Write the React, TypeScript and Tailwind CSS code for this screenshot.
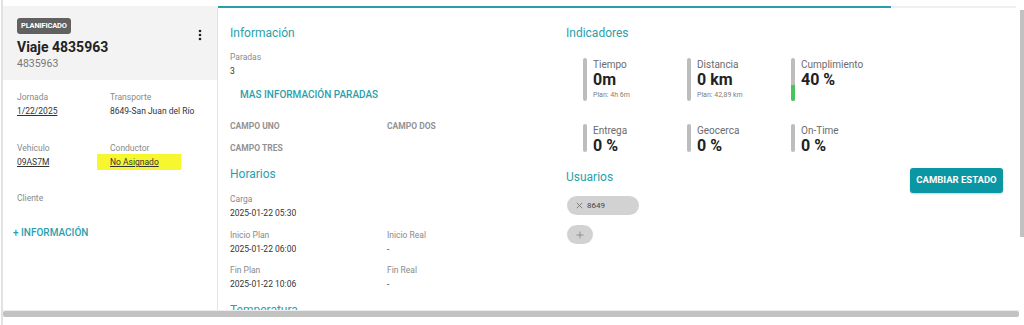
import React from "react";

const teal = "text-[#2a9fab]";

function Field({ label, value, className = "" }: { label: string; value: React.ReactNode; className?: string }) {
  return (
    <div className={className}>
      <div className="text-[8.5px] leading-[12px] text-[#8a8a8a]">{label}</div>
      <div className="mt-[2px] text-[8.5px] leading-[12px] text-[#333]">{value}</div>
    </div>
  );
}

function Indicator({
  label,
  value,
  plan,
  tall,
  fill,
}: {
  label: string;
  value: string;
  plan?: string;
  tall: boolean;
  fill?: boolean;
}) {
  return (
    <div className="w-[104px] flex gap-[6px]">
      <div
        className={`w-[4px] rounded-full bg-[#bdbdbd] flex flex-col justify-end overflow-hidden ${
          tall ? "h-[43px]" : "h-[28px]"
        }`}
      >
        {fill && <div className="h-[37%] w-full bg-[#4cc25c]" />}
      </div>
      <div>
        <div className="text-[10px] leading-[13px] text-[#6b6b6b]">{label}</div>
        <div className="text-[16px] leading-[18px] font-bold text-[#222]">{value}</div>
        {plan && <div className="mt-[1px] text-[7px] leading-[10px] text-[#808080]">{plan}</div>}
      </div>
    </div>
  );
}

export default function App() {
  return (
    <div className="w-[1024px] h-[325px] bg-white overflow-hidden flex font-['Roboto',sans-serif]">
      <div className="w-[1018px] flex flex-col border-l-[2px] border-[#e2e2e2] ml-[1px]">
        <div className="h-[6px]" />
        <div className="h-[2px] flex">
          <div className="w-[215px] bg-[#f3f3f3]" />
          <div className="w-[673px] bg-[#2a9fab]" />
          <div className="w-[125px] bg-[#efefef]" />
        </div>
        <div className="h-[302px] flex overflow-hidden">
          {/* Left panel */}
          <div className="w-[215px] shrink-0 border-r border-[#e3e3e3] flex flex-col">
            <div className="h-[72px] bg-[#f3f3f3] relative pl-[14px] pt-[10px] flex flex-col items-start">
              <div className="flex h-[16px] items-center rounded-[3px] bg-[#616161] px-[4px] text-[7.5px] leading-[8px] font-bold text-white tracking-tight">
                PLANIFICADO
              </div>
              <div className="mt-[4px] text-[14px] leading-[18px] font-bold text-[#222]">Viaje 4835963</div>
              <div className="mt-[1px] text-[10.5px] leading-[14px] text-[#777]">4835963</div>
              <svg className="absolute left-[194px] top-[21px]" width="6" height="12" viewBox="0 0 6 12">
                <circle cx="3" cy="2" r="1.3" fill="#222" />
                <circle cx="3" cy="6" r="1.3" fill="#222" />
                <circle cx="3" cy="10" r="1.3" fill="#222" />
              </svg>
            </div>
            <div className="pl-[14px] pt-[11px]">
              <div className="flex">
                <Field
                  className="w-[93px]"
                  label="Jornada"
                  value={<span className="underline">1/22/2025</span>}
                />
                <Field label="Transporte" value="8649-San Juan del Río" />
              </div>
              <div className="flex mt-[25px]">
                <Field className="w-[93px]" label="Vehículo" value={<span className="underline">09AS7M</span>} />
                <div>
                  <div className="text-[8.5px] leading-[12px] text-[#8a8a8a]">Conductor</div>
                  <div className="h-[14px] relative">
                    <div className="absolute -left-[13px] -top-[0px] h-[16px] w-[84px] bg-[#f7f72f]" />
                    <div className="relative pt-[2px] text-[8.5px] leading-[12px] text-[#333] underline">No Asignado</div>
                  </div>
                </div>
              </div>
              <div className="mt-[24px] text-[8.5px] leading-[12px] text-[#8a8a8a]">Cliente</div>
              <div className={`mt-[22px] -ml-[4px] text-[10px] leading-[14px] font-medium ${teal}`}>
                + INFORMACIÓN
              </div>
            </div>
          </div>

          {/* Middle column */}
          <div className="w-[348px] shrink-0 pl-[12px] pt-[17px]">
            <div className={`text-[12px] leading-[16px] ${teal}`}>Información</div>
            <Field className="mt-[10px]" label="Paradas" value="3" />
            <div className={`mt-[11px] ml-[10px] text-[10px] leading-[14px] font-medium ${teal}`}>
              MAS INFORMACIÓN PARADAS
            </div>
            <div className="mt-[18px] flex text-[8.5px] leading-[12px] font-bold text-[#929292]">
              <div className="w-[157px]">CAMPO UNO</div>
              <div>CAMPO DOS</div>
            </div>
            <div className="mt-[10px] text-[8.5px] leading-[12px] font-bold text-[#929292]">CAMPO TRES</div>
            <div className={`mt-[12px] text-[12px] leading-[16px] ${teal}`}>Horarios</div>
            <Field className="mt-[11px]" label="Carga" value="2025-01-22 05:30" />
            <div className="mt-[10px] flex">
              <Field className="w-[157px]" label="Inicio Plan" value="2025-01-22 06:00" />
              <Field label="Inicio Real" value="-" />
            </div>
            <div className="mt-[9px] flex">
              <Field className="w-[157px]" label="Fin Plan" value="2025-01-22 10:06" />
              <Field label="Fin Real" value="-" />
            </div>
            <div className={`mt-[12px] text-[12px] leading-[16px] ${teal}`}>Temperatura</div>
          </div>

          {/* Right column */}
          <div className="flex-1 pt-[17px]">
            <div className={`text-[12px] leading-[16px] ${teal}`}>Indicadores</div>
            <div className="ml-[17px] mt-[17px] flex">
              <Indicator label="Tiempo" value="0m" plan="Plan: 4h 6m" tall />
              <Indicator label="Distancia" value="0 km" plan="Plan: 42,89 km" tall />
              <Indicator label="Cumplimiento" value="40 %" tall fill />
            </div>
            <div className="ml-[17px] mt-[23px] flex">
              <Indicator label="Entrega" value="0 %" tall={false} />
              <Indicator label="Geocerca" value="0 %" tall={false} />
              <Indicator label="On-Time" value="0 %" tall={false} />
            </div>
            <div className="mt-[14px] flex justify-between pr-[16px]">
              <div>
                <div className={`text-[12px] leading-[16px] ${teal}`}>Usuarios</div>
                <div className="mt-[11px] ml-[1px] w-[72px] h-[19px] rounded-full bg-[#d2d2d2] flex items-center pl-[9px] gap-[4px]">
                  <svg width="7" height="7" viewBox="0 0 7 7">
                    <path d="M0.8 0.8 L6.2 6.2 M6.2 0.8 L0.8 6.2" stroke="#777" strokeWidth="0.9" />
                  </svg>
                  <span className="text-[8px] leading-[10px] font-normal text-[#444]">8649</span>
                </div>
                <div className="mt-[10px] ml-[1px] w-[26px] h-[19px] rounded-full bg-[#d2d2d2] flex items-center justify-center">
                  <svg width="8" height="8" viewBox="0 0 8 8">
                    <path d="M4 0.5 V7.5 M0.5 4 H7.5" stroke="#8a8a8a" strokeWidth="0.9" />
                  </svg>
                </div>
              </div>
              <div className="-mt-[1px] h-[25px] w-[93px] rounded-[3px] bg-[#0b96a3] flex items-center justify-center text-[9.5px] font-bold text-white shadow-[0_1px_2px_rgba(0,0,0,0.2)]">
                CAMBIAR ESTADO
              </div>
            </div>
          </div>
        </div>
        <div className="h-[1px] bg-[#ececec]" />
        <div className="h-[6px] bg-[#c2c2c2] rounded-[2px]" />
      </div>
      <div className="flex-1 flex pl-[1px]">
        <div className="mt-[10px] h-[227px] w-[4px] bg-[#c1c1c1]" />
      </div>
    </div>
  );
}
